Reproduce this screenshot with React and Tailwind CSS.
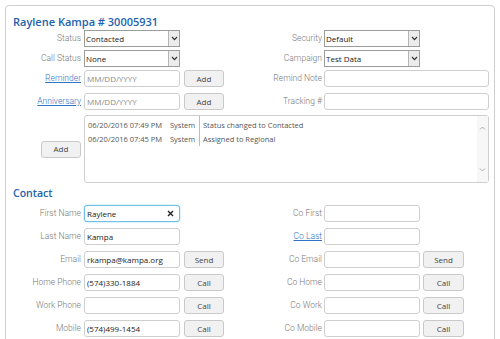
import React from 'react';

const sans = "font-['Open_Sans','Liberation_Sans',sans-serif]";

// --- small building blocks ---
function Label({ children, link, w = 'w-[78px]', pr = 'pr-[3px]' }) {
  return (
    <div className={`${w} ${pr} shrink-0 text-right font-['Roboto',sans-serif] font-light text-[8.5px] leading-[17px] whitespace-nowrap`}>
      {link ? (
        <span className="text-[#2f74c4] underline">{children}</span>
      ) : (
        <span className="text-[#777]">{children}</span>
      )}
    </div>
  );
}

function Input({ value = '', placeholder, w = 'w-[96px]', focused, clear }) {
  return (
    <div
      className={`${w} h-[17px] shrink-0 flex items-center rounded-[3px] bg-white pl-[2px] pr-[5px] ${sans} text-[8px] ${
        focused
          ? 'border border-[#6fc0e6] shadow-[0_0_2px_#8fd0ef]'
          : 'border border-[#cfcfcf]'
      }`}
    >
      <span className={`flex-1 truncate ${value ? 'text-[#222]' : 'text-[#888]'}`}>
        {value || placeholder}
      </span>
      {clear && (
        <svg width="7" height="7" viewBox="0 0 7 7">
          <path d="M1 1 L6 6 M6 1 L1 6" stroke="#222" strokeWidth="1.4" />
        </svg>
      )}
    </div>
  );
}

function Select({ value }) {
  return (
    <div className={`w-[96px] h-[17px] shrink-0 flex items-stretch border border-[#9c9c9c] bg-white ${sans} text-[8px] text-[#222]`}>
      <span className="flex-1 pl-[1px] leading-[15px] truncate">{value}</span>
      <div className="w-[11px] flex items-center justify-center border-l border-[#b5b5b5] bg-[#ececec]">
        <svg width="7" height="5" viewBox="0 0 7 5">
          <path d="M1 1 L3.5 3.6 L6 1" stroke="#333" strokeWidth="1.2" fill="none" />
        </svg>
      </div>
    </div>
  );
}

function Btn({ children, ml = 'ml-[4px]', w = 'w-[40px]' }) {
  return (
    <div className={`${w} ${ml} h-[17px] shrink-0 flex items-center justify-center rounded-[3px] border border-[#c9c9c9] bg-[#f1f1f1] ${sans} text-[8px] text-[#444]`}>
      {children}
    </div>
  );
}

function Row({ left, right, mt = 'mt-[6px]' }) {
  return (
    <div className={`flex items-center h-[17px] ${mt}`}>
      <div className="w-[240px] flex items-center">{left}</div>
      <div className="flex items-center">{right}</div>
    </div>
  );
}

const logs = [
  { date: '06/20/2016 07:49 PM', who: 'System', msg: 'Status changed to Contacted' },
  { date: '06/20/2016 07:45 PM', who: 'System', msg: 'Assigned to Regional' },
];

export default function App() {
  return (
    <div className="w-[500px] h-[339px] overflow-hidden bg-white">
      <div className="ml-[5px] mt-[5px] w-[490px] h-[360px] rounded-[4px] border border-[#cfcfcf] pt-[7px]">
        {/* Header */}
        <h1 className={`pl-[7px] h-[17px] leading-[17px] ${sans} font-semibold text-[11px] text-[#1d62ad]`}>
          Raylene Kampa # 30005931
        </h1>

        <Row
          mt="mt-0"
          left={<><Label>Status</Label><Select value="Contacted" /></>}
          right={<><Label pr="pr-[2px]">Security</Label><Select value="Default" /></>}
        />
        <Row
          mt="mt-[3px]"
          left={<><Label>Call Status</Label><Select value="None" /></>}
          right={<><Label pr="pr-[2px]">Campaign</Label><Select value="Test Data" /></>}
        />
        <Row
          mt="mt-[3px]"
          left={<><Label link>Reminder</Label><Input placeholder="MM/DD/YYYY" /><Btn>Add</Btn></>}
          right={<><Label pr="pr-[2px]">Remind Note</Label><Input w="w-[165px]" /></>}
        />
        <Row
          left={<><Label link>Anniversary</Label><Input placeholder="MM/DD/YYYY" /><Btn>Add</Btn></>}
          right={<><Label pr="pr-[2px]">Tracking #</Label><Input w="w-[165px]" /></>}
        />

        {/* History log */}
        <div className="flex items-center mt-[5px]">
          <div className="w-[78px] pr-[3px] flex justify-end">
            <Btn ml="ml-0">Add</Btn>
          </div>
          <div className="w-[405px] h-[68px] flex rounded-[3px] border border-[#cfcfcf] bg-white">
            <div className={`flex-1 ${sans} text-[7.5px] text-[#555]`}>
              <div className="flex">
                <div className="w-[83px] pl-[3px] pt-[2px]">
                  {logs.map((l) => (
                    <div key={l.date} className="h-[14px] leading-[14px] whitespace-nowrap">{l.date}</div>
                  ))}
                </div>
                <div className="w-[32px] pl-[2px] pt-[2px] border-r border-[#bdbdbd]">
                  {logs.map((l) => (
                    <div key={l.date} className="h-[14px] leading-[14px]">{l.who}</div>
                  ))}
                </div>
                <div className="pl-[3px] pt-[2px]">
                  {logs.map((l) => (
                    <div key={l.date} className="h-[14px] leading-[14px] whitespace-nowrap">{l.msg}</div>
                  ))}
                </div>
              </div>
            </div>
            <div className="w-[11px] flex flex-col items-center justify-between py-[10px] bg-[#f7f7f7]">
              <svg width="7" height="4" viewBox="0 0 7 4">
                <path d="M1 3.5 L3.5 1 L6 3.5" stroke="#aaa" strokeWidth="1" fill="none" />
              </svg>
              <svg width="7" height="4" viewBox="0 0 7 4">
                <path d="M1 0.5 L3.5 3 L6 0.5" stroke="#aaa" strokeWidth="1" fill="none" />
              </svg>
            </div>
          </div>
        </div>

        {/* Contact section */}
        <h2 className={`pl-[7px] mt-[2px] h-[16px] leading-[16px] ${sans} font-semibold text-[10.5px] text-[#1d62ad]`}>
          Contact
        </h2>
        <Row
          mt="mt-[4px]"
          left={<><Label>First Name</Label><Input value="Raylene" focused clear /></>}
          right={<><Label pr="pr-[2px]">Co First</Label><Input /></>}
        />
        <Row
          left={<><Label>Last Name</Label><Input value="Kampa" /></>}
          right={<><Label link pr="pr-[2px]">Co Last</Label><Input /></>}
        />
        <Row
          left={<><Label>Email</Label><Input value="rkampa@kampa.org" /><Btn>Send</Btn></>}
          right={<><Label pr="pr-[2px]">Co Email</Label><Input /><Btn ml="ml-[3px]" w="w-[41px]">Send</Btn></>}
        />
        <Row
          left={<><Label>Home Phone</Label><Input value="(574)330-1884" /><Btn>Call</Btn></>}
          right={<><Label pr="pr-[2px]">Co Home</Label><Input /><Btn ml="ml-[3px]" w="w-[41px]">Call</Btn></>}
        />
        <Row
          left={<><Label>Work Phone</Label><Input /><Btn>Call</Btn></>}
          right={<><Label pr="pr-[2px]">Co Work</Label><Input /><Btn ml="ml-[3px]" w="w-[41px]">Call</Btn></>}
        />
        <Row
          left={<><Label>Mobile</Label><Input value="(574)499-1454" /><Btn>Call</Btn></>}
          right={<><Label pr="pr-[2px]">Co Mobile</Label><Input /><Btn ml="ml-[3px]" w="w-[41px]">Call</Btn></>}
        />
      </div>
    </div>
  );
}
